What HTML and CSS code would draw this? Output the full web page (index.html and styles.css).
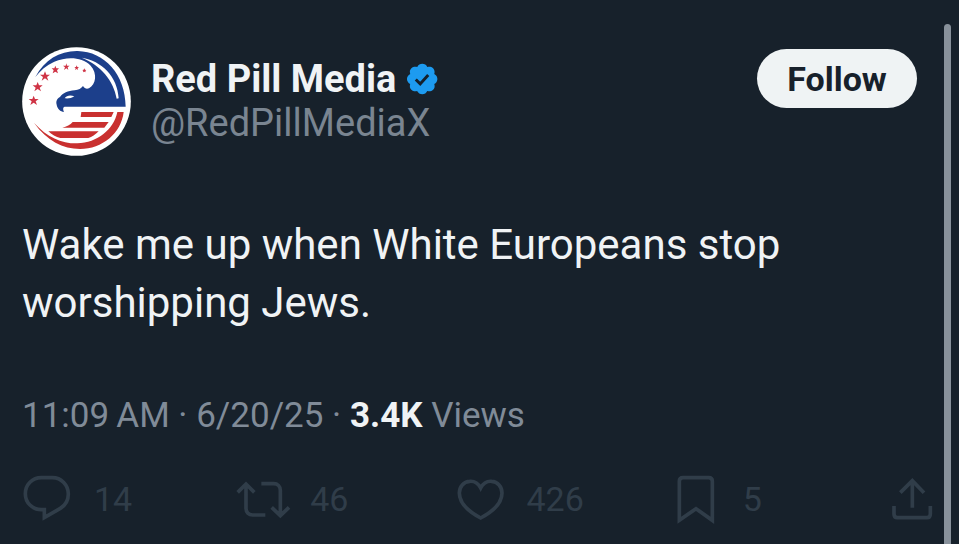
FILE: index.html
```
<!doctype html>
<html lang="en">
<head>
  <meta charset="UTF-8" />
  <meta name="viewport" content="width=device-width, initial-scale=1" />
  <title>Post</title>
  <link rel="stylesheet" href="styles.css">
</head>
<body>
  <article class="post">
    <header class="post-header">
      <svg class="avatar" viewBox="36 36 327 327" role="img" aria-label="Red Pill Media avatar">
        <circle cx="199.5" cy="199.5" r="163" fill="#fff"/>
        <path fill="#1c3f8b" d="M76 126C104 74 150 47 203 48C284 50 346 118 347 215H164C158 217 159 224 162 231C151 230 142 221 140 209C137 198 142 190 150 186C158 174 174 168 194 166C206 165 214 160 219 153C224 161 230 163 237 160C258 148 263 116 242 92C215 65 170 65 133 80C109 91 91 106 76 126Z"/>
        <path fill="#fff" d="M215 68C275 77 323 125 326 190L320 191C311 137 272 90 215 68ZM164 190C170 181 181 180 193 184C184 190 175 191 164 190Z"/>
        <path fill="#c9302f" d="M214 231H311L304 246H212ZM188 261H296L283 278H157C170 275 181 270 188 261ZM115 289H266C256 299 246 306 235 309H151C138 306 125 299 115 289ZM322 231H341C334 294 277 342 210 342C159 341 111 318 72 263C112 308 157 326 202 325C262 323 311 284 322 231Z"/>
        <g fill="#cf3345">
          <path id="star" d="M71 182L75 192L86 192L77 199L81 210L71 203L61 210L65 199L56 192L67 192Z"/>
          <use href="#star" transform="translate(12 -41)"/>
          <use href="#star" transform="translate(34 -73)"/>
          <path d="M136 92L139 100L147 100L141 106L144 115L136 110L128 115L131 106L125 100L133 100Z"/>
          <path d="M169 85L171 92L179 92L173 97L175 105L169 100L162 105L165 97L159 92L167 92Z"/>
          <path d="M200 91L202 96L207 96L203 100L204 105L200 102L195 105L197 100L193 96L198 96Z"/>
          <path d="M223 100L225 104L229 105L226 108L227 112L223 110L219 112L220 108L217 105L221 104Z"/>
        </g>
      </svg>
      <div class="author">
        <div class="name-row">
          <span class="name">Red Pill Media</span>
          <svg class="verified" viewBox="0 0 22 22" role="img" aria-label="Verified account">
            <path fill="#1d9bf0" d="M20.4 11c0-.6-.2-1.300-.5-1.800-.4-.6-.8-1-1.400-1.300.2-.6.300-1.200.1-1.900-.1-.6-.4-1.200-.8-1.600-.5-.5-1-.8-1.700-.9-.6-.1-1.300-.1-1.900.2-.2-.6-.7-1.100-1.200-1.500-.6-.3-1.200-.5-1.800-.5s-1.300.2-1.800.5c-.6.4-1 .9-1.300 1.500-.6-.3-1.300-.3-1.900-.2-.7.100-1.200.4-1.700.9-.4.4-.7 1-.9 1.600-.1.700 0 1.300.2 1.900-.6.300-1.100.7-1.400 1.300-.4.500-.6 1.200-.6 1.800s.2 1.300.6 1.800c.3.600.8 1 1.400 1.300-.2.600-.3 1.200-.2 1.900.2.600.5 1.200.9 1.600.5.500 1 .8 1.700.9.600.1 1.200.1 1.800-.2.300.6.800 1.100 1.300 1.500.6.300 1.200.5 1.900.5.600 0 1.200-.2 1.800-.5.500-.4 1-.9 1.200-1.500.6.200 1.300.3 1.900.2.700-.1 1.200-.4 1.700-.9.400-.4.700-1 .9-1.600.1-.7 0-1.300-.2-1.900.6-.3 1-.7 1.400-1.300.3-.5.500-1.200.5-1.800z"/>
            <path fill="none" stroke="#15202b" stroke-width="1.800" d="M7.200 11.300l2.700 2.700 4.900-5.500"/>
          </svg>
        </div>
        <a class="handle" href="#">@RedPillMediaX</a>
      </div>
      <button class="follow" type="button">Follow</button>
    </header>

    <p class="text">Wake me up when White Europeans stop worshipping Jews.</p>

    <div class="meta">11:09&#8201;AM · 6/20/25 · <strong>3.4K</strong> Views</div>

    <div class="actions">
      <button type="button" aria-label="Reply, 14">
        <svg viewBox="66 42 144 144"><path d="M124 50H157C184 50 205 72 205 99C205 118 196 133 181 142L133 170V146H124C97 146 76 125 76 98C76 71 97 50 124 50Z"/></svg>
        <span>14</span>
      </button>
      <button type="button" aria-label="Repost, 46">
        <svg viewBox="714 42 144 144"><path d="M713 94L738 69L763 94M738 70V142C738 154 746 162 758 162H796M784 68H821C833 68 841 76 841 88V162M815 139L841 164L867 139"/></svg>
        <span>46</span>
      </button>
      <button type="button" aria-label="Like, 426">
        <svg viewBox="72 42 144 144"><path d="M149 81C140 64 127 60 116 61C98 62 85 77 85 96C85 127 117 154 149 171C181 154 213 127 213 96C213 77 200 62 182 61C171 60 158 64 149 81Z"/></svg>
        <span>426</span>
      </button>
      <button type="button" aria-label="Bookmark, 5">
        <svg viewBox="723 42 144 144"><path d="M748 178V61C748 54 752 50 759 50H836C843 50 847 54 847 61V178L798 143Z"/></svg>
        <span>5</span>
      </button>
      <button type="button" aria-label="Share">
        <svg viewBox="81 42 144 144"><path d="M121 95L157 59L192 95M157 60V140M102 135V159C102 167 106 170 112 170H201C207 170 211 167 211 159V135"/></svg>
      </button>
    </div>
  </article>
  <div class="scrollbar"></div>
</body>
</html>
```
FILE: styles.css
```
body {
  margin: 0;
  min-height: 100vh;
  background: #17212b;
  color: #f0f3f5;
  font-family: Roboto, "Liberation Sans", sans-serif;
  overflow: hidden;
}
button {
  border: 0;
  padding: 0;
  background: none;
  color: inherit;
  font: inherit;
  cursor: pointer;
}
.post {
  padding: 47px 24px 0 22px;
}
.post-header {
  display: flex;
  align-items: flex-start;
  padding-right: 18px;
}
.avatar {
  width: 109px;
  height: 109px;
  flex: none;
}
.author {
  flex: 1;
  margin-left: 20px;
  padding-top: 10px;
}
.name-row {
  display: flex;
  align-items: center;
  gap: 8px;
}
.name {
  font-size: 38px;
  line-height: 44px;
  font-weight: 700;
}
.verified {
  width: 36px;
  height: 36px;
}
.handle {
  display: block;
  color: #7a8591;
  font-size: 38px;
  line-height: 44px;
  text-decoration: none;
}
.follow {
  width: 160px;
  height: 59px;
  margin-top: 2px;
  border-radius: 30px;
  background: #eff3f4;
  color: #17212b;
  font-size: 34px;
  font-weight: 700;
}
.text {
  margin: 60px 0 0;
  font-size: 42px;
  line-height: 58px;
}
.meta {
  margin-top: 60px;
  color: #808b98;
  font-size: 35px;
  line-height: 48px;
}
.meta strong {
  color: #f0f3f5;
}
.actions {
  display: grid;
  grid-template-columns: repeat(4, 1fr) auto;
  margin-top: 35px;
}
.actions button {
  display: flex;
  align-items: center;
  gap: 24px;
  color: #303d49;
  font-size: 34px;
  line-height: 48px;
}
.actions svg {
  width: 48px;
  height: 48px;
  overflow: visible;
  fill: none;
  stroke: currentColor;
  stroke-width: 11;
}
.scrollbar {
  position: absolute;
  top: 24px;
  right: 8px;
  bottom: 0;
  width: 7px;
  border-radius: 4px 4px 0 0;
  background: #88919b;
}
```
